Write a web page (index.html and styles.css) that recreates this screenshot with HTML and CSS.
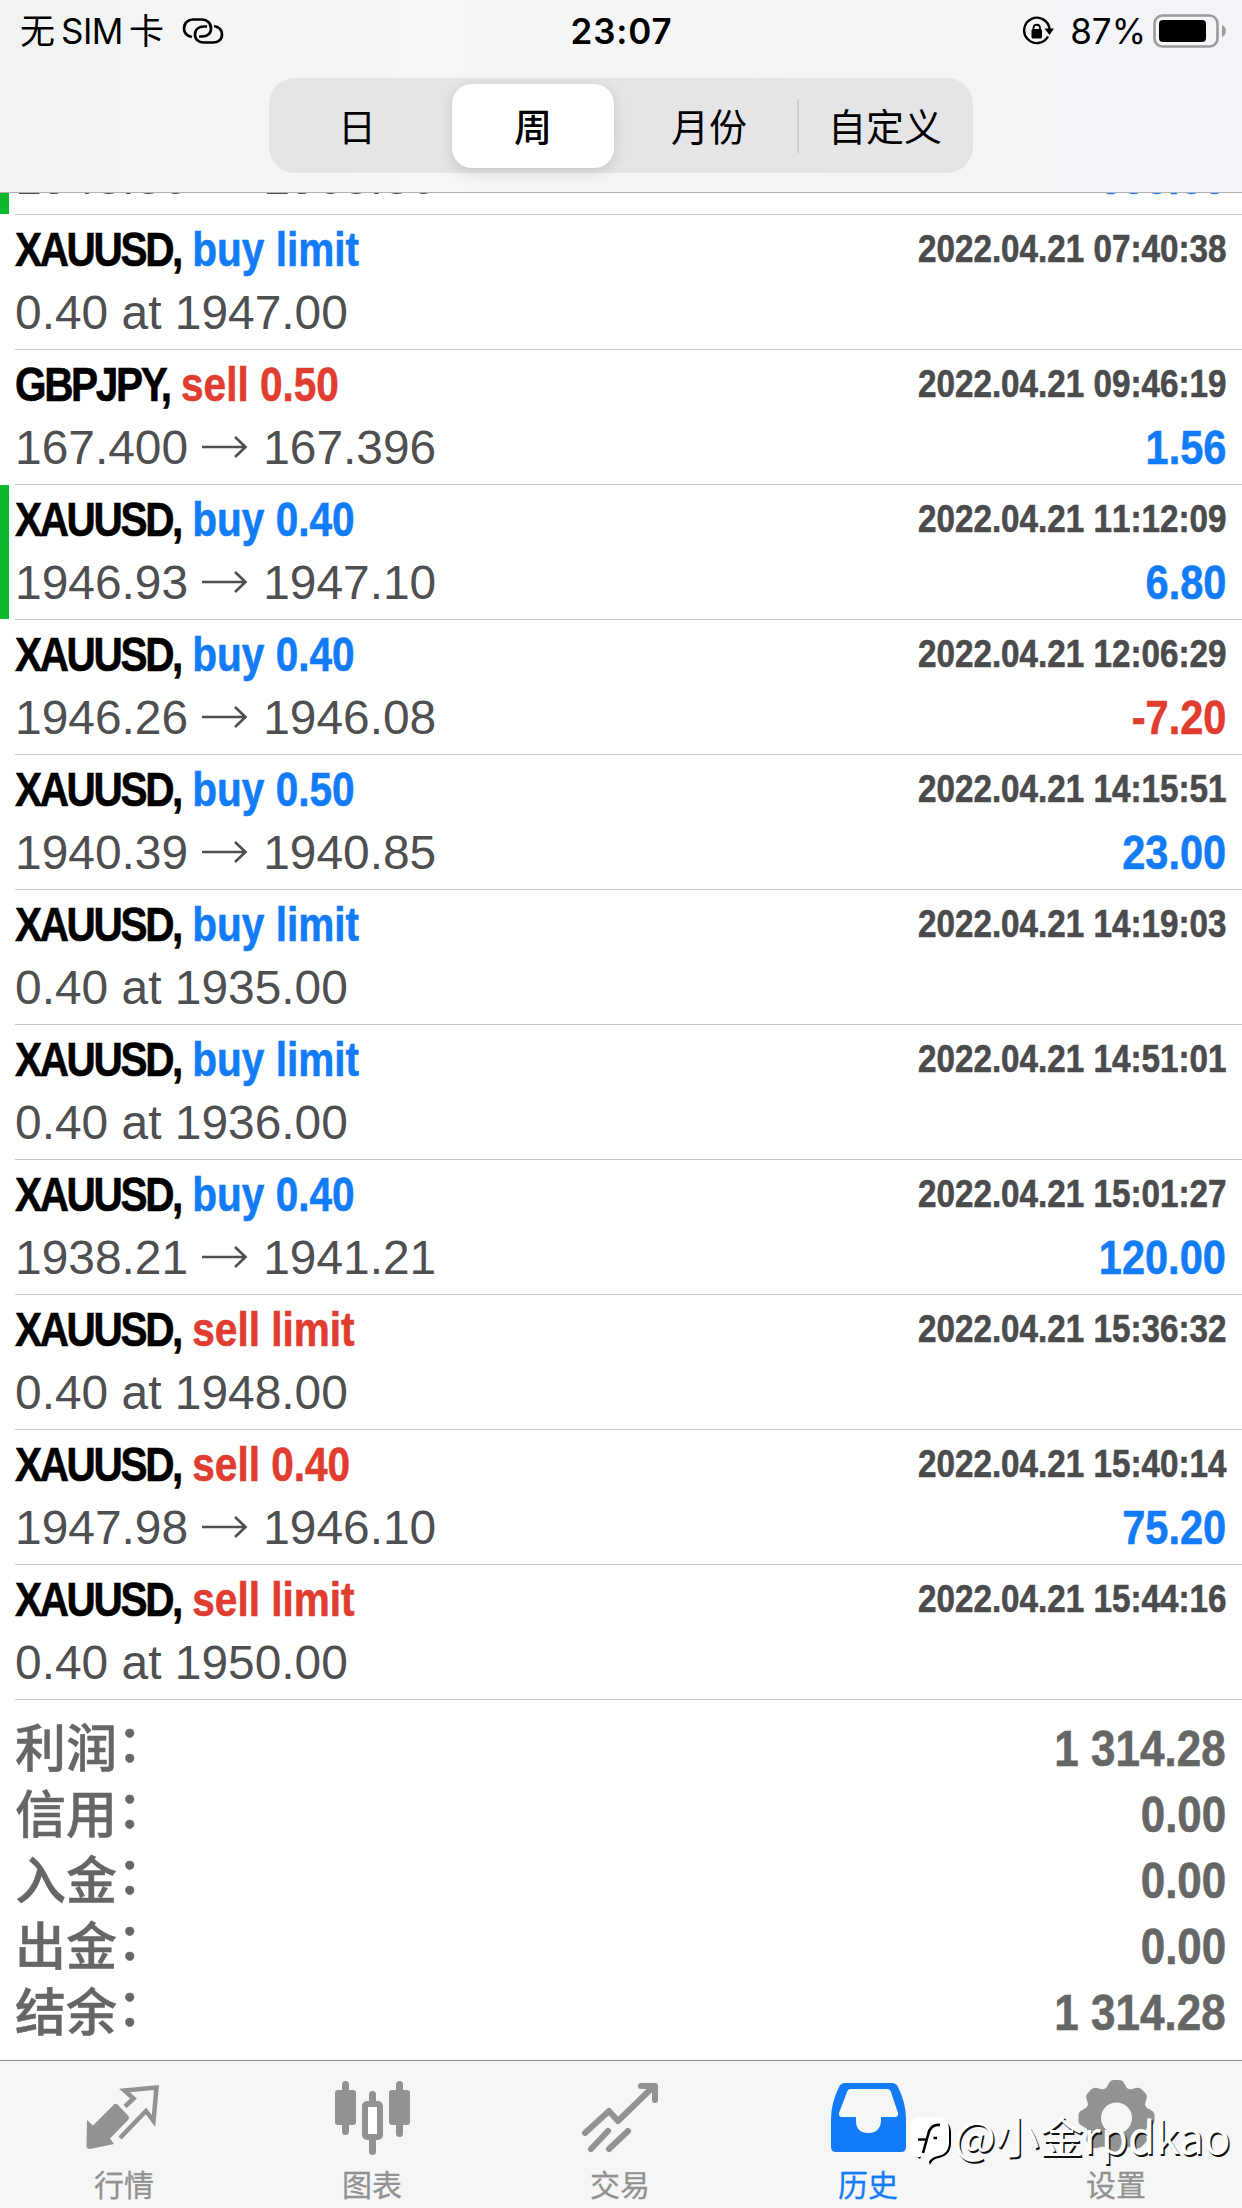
FILE: index.html
```html
<!DOCTYPE html>
<html lang="zh-CN">
<head>
    <meta charset="UTF-8">
    <meta name="viewport" content="width=device-width, initial-scale=1.0">
    <title>历史</title>
    <link rel="stylesheet" href="styles.css">
</head>
<body>
    <div class="app">
        <!-- Header -->
        <header class="header">
            <div class="status-bar">
                <div class="status-left">
                    <span class="carrier">无<span class="sim">SIM</span>卡</span>
                    <svg class="link-icon" viewBox="0 0 42 30" fill="none" stroke="#000" stroke-width="2.700">
                        <path d="M10 21C5 20 2 17 2 12.500C2 7 6 3.500 11 3.500H20C25 3.500 29 7 29 12.500C29 18 25 20.500 20 20.500H17"/>
                        <path d="M32 10C37 11 40 14 40 18.500C40 24 36 26.500 31 26.500H22C17 26.500 13 24 13 18.500C13 13 17 10.500 22 10.500H25"/>
                    </svg>
                </div>
                <div class="clock">23:07</div>
                <div class="status-right">
                    <svg class="lock-icon" viewBox="0 0 32 32">
                        <path d="M26 21.500A12.700 12.700 0 1 1 27.500 14" fill="none" stroke="#000" stroke-width="2.400"/>
                        <path d="M22.500 13.500H32L27.500 20Z"/>
                        <rect x="9.500" y="14" width="10.500" height="9.500" rx="1.500"/>
                        <path d="M11.500 15V12.500A3.300 3.300 0 0 1 18 12.500V15" fill="none" stroke="#000" stroke-width="1.800"/>
                    </svg>
                    <span class="percent">87%</span>
                    <svg class="battery-icon" viewBox="0 0 74 34">
                        <rect x="1.500" y="1.500" width="63" height="31" rx="8" fill="none" stroke="#9b9b9b" stroke-width="2.600"/>
                        <rect x="6" y="6" width="47" height="22" rx="4"/>
                        <path d="M69 11C74 12.500 74 21.500 69 23Z" fill="#9b9b9b"/>
                    </svg>
                </div>
            </div>
            <nav class="segments">
                <button class="segment">日</button>
                <button class="segment active">周</button>
                <button class="segment">月份</button>
                <button class="segment divided">自定义</button>
            </nav>
        </header>

        <!-- Orders -->
        <main class="history">
            <div class="order marked">
                <div class="line"><div class="title"><span class="symbol">XAUUSD,</span> <span class="buy">buy 0.40</span></div><div class="date">2022.04.21 05:12:40</div></div>
                <div class="line"><div class="detail">1948.86<svg class="arrow" viewBox="0 0 48 24"><path d="M2 12H45M35 2L45.500 12L35 22"/></svg>1963.86</div><div class="profit buy">600.00</div></div>
            </div>
            <div class="order">
                <div class="line"><div class="title"><span class="symbol">XAUUSD,</span> <span class="buy">buy limit</span></div><div class="date">2022.04.21 07:40:38</div></div>
                <div class="line"><div class="detail">0.40 at 1947.00</div></div>
            </div>
            <div class="order">
                <div class="line"><div class="title"><span class="symbol">GBPJPY,</span> <span class="sell">sell 0.50</span></div><div class="date">2022.04.21 09:46:19</div></div>
                <div class="line"><div class="detail">167.400<svg class="arrow" viewBox="0 0 48 24"><path d="M2 12H45M35 2L45.500 12L35 22"/></svg>167.396</div><div class="profit buy">1.56</div></div>
            </div>
            <div class="order marked">
                <div class="line"><div class="title"><span class="symbol">XAUUSD,</span> <span class="buy">buy 0.40</span></div><div class="date">2022.04.21 11:12:09</div></div>
                <div class="line"><div class="detail">1946.93<svg class="arrow" viewBox="0 0 48 24"><path d="M2 12H45M35 2L45.500 12L35 22"/></svg>1947.10</div><div class="profit buy">6.80</div></div>
            </div>
            <div class="order">
                <div class="line"><div class="title"><span class="symbol">XAUUSD,</span> <span class="buy">buy 0.40</span></div><div class="date">2022.04.21 12:06:29</div></div>
                <div class="line"><div class="detail">1946.26<svg class="arrow" viewBox="0 0 48 24"><path d="M2 12H45M35 2L45.500 12L35 22"/></svg>1946.08</div><div class="profit sell">-7.20</div></div>
            </div>
            <div class="order">
                <div class="line"><div class="title"><span class="symbol">XAUUSD,</span> <span class="buy">buy 0.50</span></div><div class="date">2022.04.21 14:15:51</div></div>
                <div class="line"><div class="detail">1940.39<svg class="arrow" viewBox="0 0 48 24"><path d="M2 12H45M35 2L45.500 12L35 22"/></svg>1940.85</div><div class="profit buy">23.00</div></div>
            </div>
            <div class="order">
                <div class="line"><div class="title"><span class="symbol">XAUUSD,</span> <span class="buy">buy limit</span></div><div class="date">2022.04.21 14:19:03</div></div>
                <div class="line"><div class="detail">0.40 at 1935.00</div></div>
            </div>
            <div class="order">
                <div class="line"><div class="title"><span class="symbol">XAUUSD,</span> <span class="buy">buy limit</span></div><div class="date">2022.04.21 14:51:01</div></div>
                <div class="line"><div class="detail">0.40 at 1936.00</div></div>
            </div>
            <div class="order">
                <div class="line"><div class="title"><span class="symbol">XAUUSD,</span> <span class="buy">buy 0.40</span></div><div class="date">2022.04.21 15:01:27</div></div>
                <div class="line"><div class="detail">1938.21<svg class="arrow" viewBox="0 0 48 24"><path d="M2 12H45M35 2L45.500 12L35 22"/></svg>1941.21</div><div class="profit buy">120.00</div></div>
            </div>
            <div class="order">
                <div class="line"><div class="title"><span class="symbol">XAUUSD,</span> <span class="sell">sell limit</span></div><div class="date">2022.04.21 15:36:32</div></div>
                <div class="line"><div class="detail">0.40 at 1948.00</div></div>
            </div>
            <div class="order">
                <div class="line"><div class="title"><span class="symbol">XAUUSD,</span> <span class="sell">sell 0.40</span></div><div class="date">2022.04.21 15:40:14</div></div>
                <div class="line"><div class="detail">1947.98<svg class="arrow" viewBox="0 0 48 24"><path d="M2 12H45M35 2L45.500 12L35 22"/></svg>1946.10</div><div class="profit buy">75.20</div></div>
            </div>
            <div class="order">
                <div class="line"><div class="title"><span class="symbol">XAUUSD,</span> <span class="sell">sell limit</span></div><div class="date">2022.04.21 15:44:16</div></div>
                <div class="line"><div class="detail">0.40 at 1950.00</div></div>
            </div>
        </main>

        <!-- Totals -->
        <section class="summary">
            <div class="total"><span class="label">利润<span class="colon">：</span></span><span class="value">1 314.28</span></div>
            <div class="total"><span class="label">信用<span class="colon">：</span></span><span class="value">0.00</span></div>
            <div class="total"><span class="label">入金<span class="colon">：</span></span><span class="value">0.00</span></div>
            <div class="total"><span class="label">出金<span class="colon">：</span></span><span class="value">0.00</span></div>
            <div class="total"><span class="label">结余<span class="colon">：</span></span><span class="value">1 314.28</span></div>
        </section>

        <!-- Tab bar -->
        <footer class="tab-bar">
            <a class="tab">
                <svg class="tab-icon" viewBox="2 0 76 76">
                    <path d="M3 31L9 36.500L30 15.500Q32 14 34 16L44 26.500Q46 28.500 44 31L26 49.500L30 55L6 60Q2.500 60 2.500 57Z" fill="currentColor"/>
                    <path d="M41 17.500L49.500 9.500L40.500 1.500L72.500 -1.500L69.500 32L62 22L36 49" fill="none" stroke="currentColor" stroke-width="4.500"/>
                </svg>
                <span>行情</span>
            </a>
            <a class="tab">
                <svg class="tab-icon" viewBox="0 0 76 76" fill="currentColor">
                    <rect x="8" y="-8" width="7" height="54" rx="3.500"/>
                    <rect x="1" y="1" width="21" height="35" rx="3"/>
                    <rect x="62" y="-8" width="7" height="56" rx="3.500"/>
                    <rect x="55" y="1" width="21" height="35" rx="3"/>
                    <rect x="35" y="2" width="7" height="15" rx="3.500"/>
                    <rect x="35" y="47" width="7" height="19" rx="3.500"/>
                    <rect x="31" y="15" width="15" height="33" rx="2" fill="#fff" stroke="currentColor" stroke-width="6"/>
                </svg>
                <span>图表</span>
            </a>
            <a class="tab">
                <svg class="tab-icon" viewBox="0 0 76 76" fill="none" stroke="currentColor" stroke-width="6" stroke-linecap="round" stroke-linejoin="round">
                    <path d="M3 44L27 22L36 32L72 -3"/>
                    <path d="M59 -3H73V11"/>
                    <path d="M9 60L26 42M27 60L46 42"/>
                </svg>
                <span>交易</span>
            </a>
            <a class="tab active">
                <svg class="tab-icon" viewBox="0 0 76 76">
                    <path d="M15 -6H62Q66 -6 68 -2Q76 14 76 30V58Q76 63 71 63H6Q1 63 1 58V30Q1 14 9 -2Q11 -6 15 -6Z" fill="currentColor"/>
                    <path d="M20 0H57Q60 0 61 3L68 24Q68.500 28 65 28H51V32Q50 44 38.500 44Q26 44 26 32V28H12Q8.500 28 9 24L17 3Q18 0 20 0Z" fill="#f6f6f6"/>
                </svg>
                <span>历史</span>
            </a>
            <a class="tab">
                <svg class="tab-icon" viewBox="0 0 76 76">
                    <circle cx="38.500" cy="29" r="23.500" fill="none" stroke="currentColor" stroke-width="16"/>
                    <g fill="currentColor">
                        <path id="tooth" d="M27 1L31 -6Q32.500 -9 36 -9H41Q44.500 -9 46 -6L50 1Z"/>
                        <use href="#tooth" transform="rotate(45 38.500 29)"/>
                        <use href="#tooth" transform="rotate(90 38.500 29)"/>
                        <use href="#tooth" transform="rotate(135 38.500 29)"/>
                        <use href="#tooth" transform="rotate(180 38.500 29)"/>
                        <use href="#tooth" transform="rotate(225 38.500 29)"/>
                        <use href="#tooth" transform="rotate(270 38.500 29)"/>
                        <use href="#tooth" transform="rotate(315 38.500 29)"/>
                    </g>
                </svg>
                <span>设置</span>
            </a>
        </footer>

        <div class="watermark">
            <svg class="watermark-logo" viewBox="0 0 46 52">
                <path d="M30 4Q43 4 43 17V27Q43 39 31 42Q24 43 22 49Q19 43 24 41L34 34Z" fill="#000"/>
                <path d="M6 39L12 43L15 36Z" fill="#000"/>
                <path d="M12 1H30Q41 1 41 14V26Q41 38 30 40Q24 41 20.500 46Q20 41 17 38L12 41Q6 42 2 36V12Q2 1 12 1Z" fill="#fff"/>
                <path d="M32 9Q22 8 20 19L15 37M10 23.500H19M25.500 22H29" fill="none" stroke="#000" stroke-width="2.600"/>
            </svg>
            <span>@小金rpdkao</span>
        </div>
    </div>
</body>
</html>
```
FILE: styles.css
```css
/* Reset and base styles */
* {
    box-sizing: border-box;
    margin: 0;
    padding: 0;
}

body {
    width: 1242px;
    font-family: "Liberation Sans", "Noto Sans CJK SC", sans-serif;
    background-color: #fff;
}

.app {
    position: relative;
    width: 1242px;
    height: 2208px;
    display: flex;
    flex-direction: column;
    overflow: hidden;
}

/* Header styles */
.header {
    height: 193px;
    flex-shrink: 0;
    background: linear-gradient(90deg, #f1f2f1 0, #f4f5f7 200px, #f6f6f6 420px, #f5f5f6 900px, #f3f4f9 100%);
    border-bottom: 1px solid #b2b2b2;
}

.status-bar {
    height: 78px;
    padding: 0 16px 16px 20px;
    display: grid;
    grid-template-columns: 1fr auto 1fr;
    align-items: center;
    font-family: Inter, "Noto Sans CJK SC", sans-serif;
    font-size: 35px;
}

.status-left,
.status-right {
    display: flex;
    align-items: center;
}

.status-right {
    justify-content: flex-end;
}

.carrier {
    line-height: 62px;
    white-space: nowrap;
}

.sim {
    margin: 0 6px 0 6px;
    letter-spacing: -0.5px;
}

.link-icon {
    width: 42px;
    height: 30px;
    margin-left: 18px;
}

.clock {
    margin-right: 3px;
    font-weight: 600;
    letter-spacing: 0.8px;
}

.lock-icon {
    width: 32px;
    height: 32px;
    margin-right: 16px;
}

.percent {
    letter-spacing: 0;
    margin-right: 7px;
}

.battery-icon {
    width: 74px;
    height: 34px;
    margin-right: -1px;
}

/* Period switch */
.segments {
    width: 704px;
    height: 95px;
    margin: 0 auto;
    padding: 6px 0 5px;
    display: flex;
    background-color: #e5e5e7;
    border-radius: 26px;
}

.segment {
    position: relative;
    width: 176px;
    padding-bottom: 3px;
    border: none;
    background: none;
    font-family: "Noto Sans CJK SC", sans-serif;
    font-size: 38px;
    line-height: 56px;
    color: #000;
}

.segment.active {
    width: 162px;
    margin: 0 7px;
    background-color: #fff;
    border-radius: 20px;
    font-weight: 500;
    box-shadow: 0 4px 14px rgba(0, 0, 0, 0.14);
}

.segment.divided::before {
    content: "";
    position: absolute;
    left: 0;
    top: 15px;
    width: 2px;
    height: 54px;
    background-color: #cfcfd2;
}

/* Order list, scrolled to the last row */
.history {
    height: 1507px;
    flex-shrink: 0;
    display: flex;
    flex-direction: column;
    justify-content: flex-end;
    overflow: hidden;
}

.order {
    position: relative;
    height: 135px;
    flex-shrink: 0;
    margin-left: 15px;
    padding: 5px 16px 0 0;
    border-bottom: 1px solid #c6c6c8;
}

.order.marked::before {
    content: "";
    position: absolute;
    left: -15px;
    top: 0;
    width: 9px;
    height: 134px;
    background-color: #0cb82c;
}

.line {
    display: flex;
    justify-content: space-between;
    white-space: nowrap;
}

.title,
.date,
.profit,
.value {
    font-weight: bold;
    transform-origin: right top;
    -webkit-text-stroke: 0.6px currentColor;
}

.title {
    font-size: 48px;
    line-height: 60px;
    transform: scaleX(0.845);
    transform-origin: left top;
}

.symbol {
    color: #000;
    letter-spacing: -2.8px;
}

.buy {
    color: #127bf7;
}

.sell {
    color: #e03c2f;
}

.date {
    font-size: 38.5px;
    line-height: 58px;
    color: #4b4b4d;
    font-kerning: none;
    transform: scaleX(0.863);
}

.detail {
    font-size: 47.9px;
    line-height: 66px;
    color: #4f4f51;
    font-kerning: none;
}

.arrow {
    width: 48px;
    height: 24px;
    margin: 0 15px 0 12px;
    fill: none;
    stroke: #4f4f51;
    stroke-width: 2.6;
    vertical-align: 5px;
}

.profit {
    font-size: 48px;
    line-height: 66px;
    transform: scaleX(0.865);
}

/* Summary styles */
.summary {
    flex: 1;
    padding: 16px 16px 0 15px;
}

.total {
    height: 66px;
    display: flex;
    justify-content: space-between;
    line-height: 66px;
    color: #666;
}

.label {
    margin-top: -4px;
    font-family: "Noto Sans CJK SC", sans-serif;
    font-size: 51px;
    font-weight: 500;
    -webkit-text-stroke: 0.5px currentColor;
}

.colon {
    line-height: 1;
    vertical-align: 5px;
}

.value {
    font-size: 50px;
    transform: scaleX(0.88);
}

/* Tab bar styles */
.tab-bar {
    height: 148px;
    flex-shrink: 0;
    padding-right: 2px;
    display: flex;
    background-color: #f6f6f6;
    border-top: 1px solid #8c8c8c;
}

.tab {
    flex: 1;
    padding-top: 28px;
    display: flex;
    flex-direction: column;
    align-items: center;
    font-family: "Noto Sans CJK SC", sans-serif;
    font-size: 30px;
    line-height: 37px;
    color: #929292;
    -webkit-text-stroke: 0.3px currentColor;
}

.tab.active {
    color: #127bf7;
}

.tab-icon {
    width: 76px;
    height: 76px;
    overflow: visible;
}

/* Watermark over the tab bar */
.watermark {
    position: absolute;
    left: 908px;
    top: 2102px;
    display: flex;
    align-items: center;
    font-family: "Noto Sans CJK SC", sans-serif;
    font-size: 44px;
    line-height: 56px;
    font-weight: 400;
    color: #fff;
    text-shadow: 1.5px 1.5px 0 #111;
    white-space: nowrap;
}

.watermark-logo {
    width: 46px;
    height: 52px;
    margin-top: 14px;
}
```
